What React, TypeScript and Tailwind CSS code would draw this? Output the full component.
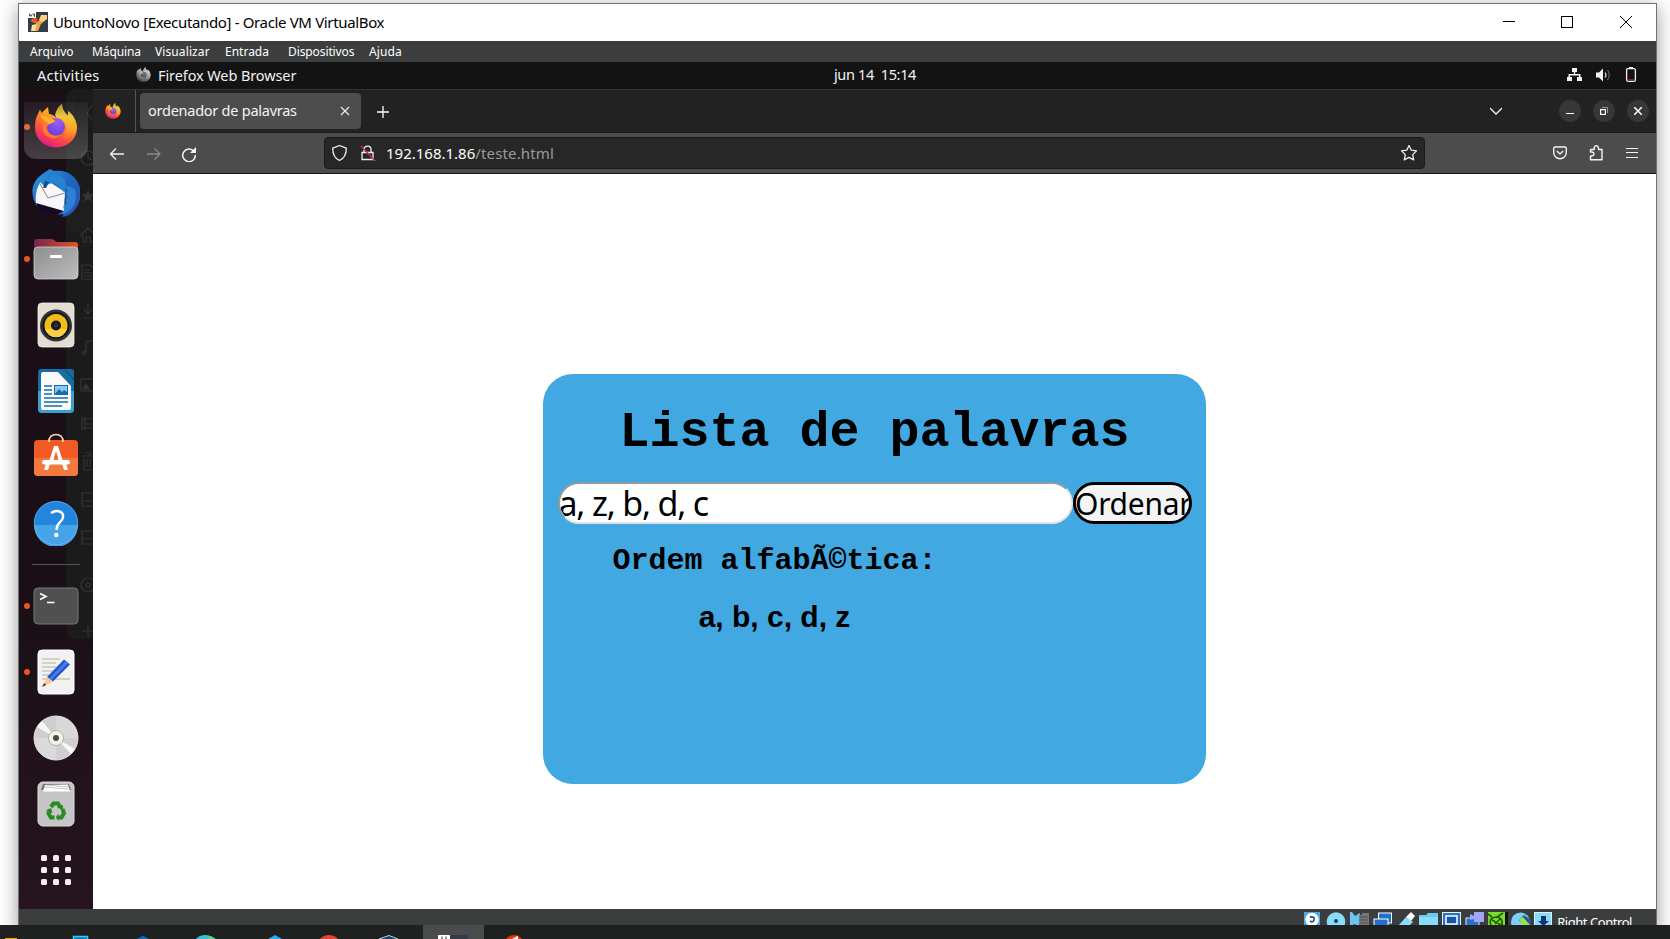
import React, { useId, useState } from "react";

const UI = "font-['Noto_Sans','Liberation_Sans',sans-serif]";

function Firefox({ className }: { className?: string }) {
  const id = useId().replace(/[^a-zA-Z0-9]/g, "");
  return (
    <svg viewBox="0 0 42 44" className={className}>
      <defs>
        <linearGradient id={id + "a"} x1="0.8" y1="0" x2="0.3" y2="1">
          <stop offset="0" stopColor="#ffe14a" />
          <stop offset="0.35" stopColor="#ffa726" />
          <stop offset="0.65" stopColor="#ff5a36" />
          <stop offset="1" stopColor="#e31587" />
        </linearGradient>
        <radialGradient id={id + "b"} cx="0.6" cy="0.2" r="0.9">
          <stop offset="0" stopColor="#a05cf5" />
          <stop offset="1" stopColor="#5b3fd0" />
        </radialGradient>
        <linearGradient id={id + "c"} x1="0" y1="0" x2="0" y2="1">
          <stop offset="0" stopColor="#a8922e" />
          <stop offset="0.35" stopColor="#ecc93a" />
          <stop offset="1" stopColor="#ff9a22" stopOpacity="0.2" />
        </linearGradient>
      </defs>
      <path
        d="M0 24C0 17 1 14 2 12L5 5.500L6.500 9L13 3L14 10C16 10 19 11.500 21 13C21 7 23 3 27 0C27 6 30 8 32.500 12L33.500 7C39 12 42 18 42 24A21 19.500 0 0 1 0 24Z"
        fill={`url(#${id}a)`}
      />
      <path d="M27 0C27 6 30 8 32.500 12L33.500 7C39 12 43 20 41 26C38 34 32 36 27 34C33 30 33 22 29 17C26 14 22 15 20 11C21 6 24 2 27 0Z" fill={`url(#${id}c)`} />
      <circle cx="21" cy="23" r="9" fill={`url(#${id}b)`} />
      <path d="M5 14C9 13 15 13 20 17L15 20C12 21 11 23 12 26C14 32 22 33 27 30C22 37 10 35 8 26C7 21 8 17 5 14Z" fill="#ff7a2a" />
      <path d="M5 12C11 11 17 14 20.500 17.500L14 20C11 18 8 16 5 12Z" fill="#ffb02e" />
    </svg>
  );
}

function Thunderbird() {
  return (
    <svg viewBox="0 0 48 48" className="size-12">
      <defs>
        <linearGradient id="tb" x1="0" y1="0" x2="1" y2="1">
          <stop offset="0" stopColor="#2f9be6" />
          <stop offset="0.5" stopColor="#1f66c0" />
          <stop offset="1" stopColor="#2a4fb5" />
        </linearGradient>
      </defs>
      <path d="M18 0L22 2C35 0 45 7 48 19C50 30 46 41 35 47L30 48L32 45L26 46C30 42 33 37 34 30L8 15L5 37C-2 27 -1 14 8 7C11 4 15 2 18 0Z" fill="url(#tb)" />
      <path d="M4 34C9 35 25 38 32 42C26 45 14 46 8 41Z" fill="#150a26" />
      <path d="M8 14L16 12L33 23L32 42L4 34C3 26 5 18 8 14Z" fill="#f7f7f9" />
      <path d="M8 15L16 29L33 24" fill="none" stroke="#8a8a92" strokeWidth="1" />
      <path d="M9 15C12 10 15 5 21 4C28 5 34 10 34 16L32 23L24 15C20 13 15 15 12 19C12 16 11 15 9 15Z" fill="#2583d2" />
      <path d="M13 12L17 13L14 19L11 19Z" fill="#174c8c" />
      <path d="M33 16L36 22L34 24L36 28L33 31L35 35L31 37L32 41L30 46C42 41 46 33 43 20Z" fill="#2f8ad8" opacity="0.8" />
    </svg>
  );
}

function Files() {
  return (
    <svg viewBox="0 0 46 42" className="h-[42px] w-[46px]">
      <defs>
        <linearGradient id="fb" x1="0" y1="0" x2="1" y2="0">
          <stop offset="0" stopColor="#752354" />
          <stop offset="1" stopColor="#e9541f" />
        </linearGradient>
        <linearGradient id="ff" x1="0" y1="0" x2="1" y2="1">
          <stop offset="0" stopColor="#8e8e8e" />
          <stop offset="1" stopColor="#bdbdbd" />
        </linearGradient>
      </defs>
      <path d="M1 4Q1 1 4 1H18Q20 1 21.500 2.500T25 4H42Q45 4 45 7V25H1Z" fill="url(#fb)" />
      <rect x="1" y="9" width="44" height="32" rx="4" fill="url(#ff)" stroke="#d0d0d0" strokeWidth="0.8" />
      <rect x="17" y="17" width="12" height="3" rx="1" fill="#fff" />
    </svg>
  );
}

function Rhythmbox() {
  return (
    <svg viewBox="0 0 38 46" className="h-[46px] w-[38px]">
      <rect x="1" y="1" width="36" height="44" rx="4" fill="#e3ded2" stroke="#f2efe8" strokeWidth="0.8" />
      <circle cx="19" cy="23.500" r="16" fill="#33343a" />
      <circle cx="19" cy="23.500" r="13.500" fill="#14151a" />
      <circle cx="19" cy="23.500" r="11.500" fill="#f0bd18" />
      <path d="M8 27A11.500 11.500 0 0 0 30 27Z" fill="#f8cf45" />
      <circle cx="19" cy="23.500" r="5" fill="#17191c" />
      <circle cx="19" cy="23.500" r="2" fill="#33363a" />
    </svg>
  );
}

function Writer() {
  return (
    <svg viewBox="0 0 38 46" className="h-[46px] w-[38px]">
      <path d="M5 1H27L37 12V41Q37 45 33 45H5Q1 45 1 41V5Q1 1 5 1Z" fill="#136ea8" />
      <path d="M1 23H37V41Q37 45 33 45H5Q1 45 1 41Z" fill="#3f9fd0" />
      <path d="M27 1H34Q37 1 37 4V11Z" fill="#1c6a9c" />
      <path d="M6 4H21L34 18V40Q34 42 32 42H6Q4 42 4 40V6Q4 4 6 4Z" fill="#fafafa" />
      <path d="M7 18H15M7 22H15M7 26H15M7 30H31M7 34H31M7 38H25" stroke="#136ea8" strokeWidth="1.700" />
      <rect x="17.500" y="17.500" width="13" height="9" fill="#8cc8ea" stroke="#136ea8" />
      <path d="M18 26L22 21L25 24L27 22L30 24V26Z" fill="#136ea8" />
    </svg>
  );
}

function Software() {
  return (
    <svg viewBox="0 0 46 44" className="-mt-[5px] h-[44px] w-[46px]">
      <rect x="1" y="7" width="44" height="36" rx="4" fill="#f15a24" />
      <path d="M1 25H45V39Q45 43 41 43H5Q1 43 1 39Z" fill="#f4793f" />
      <path d="M21 13H25L29.500 27H25.500L23 18L20.500 27H16.500Z" fill="#fff" />
      <rect x="9" y="27" width="28" height="4.500" rx="2.200" fill="#fff" />
      <path d="M12.800 31L11 37H15L17 31ZM29 31L31 37H35L33.200 31Z" fill="#fff" />
      <path d="M16 9C15 -1 31 -1 30 9" fill="none" stroke="#f0d9b5" strokeWidth="1.600" />
    </svg>
  );
}

function Help() {
  return (
    <svg viewBox="0 0 46 46" className="-mt-px size-[46px]">
      <circle cx="23" cy="23" r="22" fill="#2385dd" />
      <path d="M1 25H45A22 22 0 0 1 1 25Z" fill="#45a3e8" />
      <circle cx="23" cy="23" r="21.700" fill="none" stroke="#7bbdf0" strokeWidth="0.600" />
      <path d="M18 13C24 9 31 11.500 30 17.500C29 23 23.500 22 23.500 30" fill="none" stroke="#fff" strokeWidth="2.400" />
      <circle cx="23.300" cy="35" r="2.200" fill="#fff" />
    </svg>
  );
}

function Terminal() {
  return (
    <svg viewBox="0 0 46 38" className="h-[38px] w-[46px]">
      <rect x="1" y="1" width="44" height="36" rx="4" fill="#505050" stroke="#777" />
      <path d="M7 6.500L13 9.500L7 12.500" fill="none" stroke="#fff" strokeWidth="1.700" />
      <path d="M14 15.500H21.500" stroke="#fff" strokeWidth="1.500" />
    </svg>
  );
}

function TextEditor() {
  return (
    <svg viewBox="0 0 38 46" className="h-[46px] w-[38px]">
      <rect x="1" y="1" width="36" height="44" rx="4" fill="#f2f2f2" stroke="#fff" />
      <path d="M5 10H23M5 14H19M5 18H19M5 22H18M5 26H14M5 30H33" stroke="#c9c5b9" strokeWidth="1.700" />
      <path d="M10 28L27 10.500L33 15.500L16 32.500Z" fill="#2456cf" />
      <path d="M12 30L29 12L31 14L14 31Z" fill="#4d7fe8" />
      <path d="M10 28L16 32.500L6 37.500Z" fill="#fdc48b" />
      <path d="M7.300 34L9 36L5 38Z" fill="#3a2a22" />
    </svg>
  );
}

function Disc() {
  return (
    <svg viewBox="0 0 46 46" className="size-[46px]">
      <circle cx="23" cy="23" r="22" fill="#cfcfcf" stroke="#e4e4e4" />
      <path d="M23 23V1A22 22 0 0 1 45 23Z" fill="#d9d9d9" />
      <path d="M23 23V45A22 22 0 0 1 1 23Z" fill="#dadada" />
      <path d="M23 23L4 12L9 6ZM23 23L42 34L38 39Z" fill="#f7f7f5" />
      <circle cx="23" cy="23" r="7.500" fill="#f5f3ee" stroke="#b9af9c" />
      <circle cx="23" cy="23" r="3" fill="#4b4b4b" />
    </svg>
  );
}

function Trash() {
  return (
    <svg viewBox="0 0 38 46" className="h-[46px] w-[38px]">
      <rect x="1" y="1" width="36" height="44" rx="5" fill="#c6c6c6" stroke="#dcdcdc" />
      <path d="M4 9L6 3H32L34 9Z" fill="#777" />
      <path d="M6 10.500L8 4L31 3.500L33 10.500Z" fill="#fff" />
      <path d="M7 6L31 8M9 4L32 6" stroke="#aaa" strokeWidth="0.700" />
      <g fill="none" stroke="#2a8a1f" strokeWidth="4">
        <path d="M14 26L16.500 22.500H21L23.500 26.500" />
        <path d="M25.500 28L27 32L24.500 36.500H20.500" />
        <path d="M17.500 36.500H14L11.500 32.500L13 28.500" />
      </g>
      <path d="M20 26.500L26 24V29ZM21.500 32.500V40L18.800 36.500ZM9 29.500L14 27L15.500 32Z" fill="#2a8a1f" />
    </svg>
  );
}

function AppGrid() {
  return (
    <div className="grid grid-cols-3 gap-x-[6px] gap-y-[6px]">
      {Array.from({ length: 9 }, (_, i) => (
        <span key={i} className="size-[6px] rounded-[1.5px] bg-[#f2f0ef]" />
      ))}
    </div>
  );
}

function DockItem({ running, children }: { running?: boolean; children: React.ReactNode }) {
  return (
    <li className="relative flex h-[66px] shrink-0 items-center justify-center">
      {running && <span className="absolute top-[30px] left-[5px] size-[6px] rounded-full bg-[#e95420]" />}
      {children}
    </li>
  );
}

function BackgroundWindow() {
  return (
    <svg viewBox="0 0 27 550" className="absolute top-0 left-[47px] h-[550px] w-[27px]">
      <path d="M27 0H10Q0 0 0 10V540Q0 550 10 550H27Z" fill="#1b1b1b" />
      <path d="M7 40V10Q7 7 10 7H27" fill="none" stroke="#222" />
      <path d="M0 106H27V144H0Z" fill="#1e1e1e" />
      <g fill="none" stroke="#353535" strokeWidth="1.200">
        <path d="M26 16L21 24L26 31" />
        <circle cx="22" cy="69" r="7" />
        <path d="M22 64V69L26 71" />
        <path d="M14 147L22 139L30 147M17 146V153H20V148H24V153H27" />
        <path d="M16 176H24L28 180V190H16ZM18 181H24M18 184H27M18 187H27" />
        <path d="M22 214V224M18 220L22 225L26 220M18 229H27" />
        <path d="M20 264V253L27 251" />
        <circle cx="18" cy="264" r="1.500" />
        <rect x="15" y="290" width="16" height="12" />
        <path d="M17 300L20 295L23 300Z" fill="#353535" />
        <path d="M16 328V341M19 328V341M16 330H27M19 335H27M16 339H27" />
        <path d="M16 367H27M18 369V381H27M20 364H24V367M21 370V378M24 370V378" />
        <path d="M27 404H16V417H27M16 412H27M27 442H16V455H27M16 450H27" />
        <circle cx="22" cy="496" r="7" />
        <circle cx="22" cy="496" r="2" />
        <path d="M16 542H27M22 536V548" />
      </g>
      <path d="M22 101L24 105H28L25 108L26 113L22 110L18 113L19 108L16 105H20Z" fill="#353535" />
    </svg>
  );
}

function Dock() {
  return (
    <nav className="relative w-[74px] shrink-0 overflow-hidden bg-linear-to-b from-[#1a0f16] from-60% to-[#26141f]">
      <BackgroundWindow />
      <ul className="relative pt-[5px]">
        <DockItem running>
          <span className="absolute top-[8px] left-[5px] h-[57px] w-16 rounded-b-xl bg-linear-to-b from-white/5 to-white/20" />
          <Firefox className="relative -mt-[2px] h-[44px] w-[42px]" />
        </DockItem>
        <DockItem><Thunderbird /></DockItem>
        <DockItem running><Files /></DockItem>
        <DockItem><Rhythmbox /></DockItem>
        <DockItem><Writer /></DockItem>
        <DockItem><Software /></DockItem>
        <DockItem><Help /></DockItem>
        <li className="flex h-[17px] items-center justify-center">
          <span className="h-px w-12 bg-[#5a5156]" />
        </li>
        <DockItem running><Terminal /></DockItem>
        <DockItem running><TextEditor /></DockItem>
        <DockItem><Disc /></DockItem>
        <DockItem><Trash /></DockItem>
        <DockItem><AppGrid /></DockItem>
      </ul>
    </nav>
  );
}

function TitleBar() {
  return (
    <header className="flex h-[37px] shrink-0 items-center bg-white pl-[9px]">
      <svg viewBox="0 0 20 20" className="-mt-px size-5">
        <rect width="20" height="20" fill="#343c4a" />
        <path d="M4 7L9 10L19 3V7L13 12L10 19H4L9 12L3 9Z" fill="#f0a040" />
        <path d="M13 3H19V7L14 10L11 8Z" fill="#ffd27a" />
        <path d="M4 13L9 12L7 19H3Z" fill="#fbe0a0" />
        <circle cx="7" cy="8" r="2.500" fill="#e8541c" />
        <rect width="8" height="6" fill="#fff" />
        <path d="M1.500 1.500V4H3.500V3H1.500M5 1.500V3H7M6.500 1.500V5" fill="none" stroke="#333" strokeWidth="0.800" />
      </svg>
      <h1 className="mt-[-2px] ml-[5px] text-[15px] leading-5 tracking-[-0.35px] whitespace-nowrap text-black">
        UbuntoNovo [Executando] - Oracle VM VirtualBox
      </h1>
      <svg viewBox="0 0 132 14" className="-mt-px mr-[22px] ml-auto h-[14px] w-[132px]" fill="none" stroke="#000" shapeRendering="crispEdges">
        <path d="M1 6.500H13" />
        <rect x="59.500" y="1.500" width="11" height="11" />
        <path d="M118 1L130 13M130 1L118 13" shapeRendering="auto" />
      </svg>
    </header>
  );
}

function MenuBar() {
  return (
    <div className="flex h-[21px] shrink-0 items-center bg-[#3b3d3e] pl-[11px] text-[12px] leading-none whitespace-nowrap text-white">
      <span className="w-[62px]">Arquivo</span>
      <span className="w-[63px] tracking-[-0.1px]">Máquina</span>
      <span className="w-[70px] tracking-[0.1px]">Visualizar</span>
      <span className="w-[63px]">Entrada</span>
      <span className="w-[81px] tracking-[-0.1px]">Dispositivos</span>
      <span className="tracking-[0.1px]">Ajuda</span>
    </div>
  );
}

function GnomeBar() {
  return (
    <div className="grid h-[27px] shrink-0 grid-cols-3 items-center bg-[#131313] text-[14.5px] leading-none whitespace-nowrap text-[#f2f2f2]">
      <div className="flex items-center pl-[18px]">
        <span className="w-[99px] tracking-[0.2px]">Activities</span>
        <Firefox className="-mt-[2px] h-[15px] w-[15px] grayscale" />
        <span className="ml-[7px] tracking-[-0.1px]">Firefox Web Browser</span>
      </div>
      <span className="-mt-[2px] pl-[75px] text-center tracking-[-0.35px] whitespace-pre">jun 14  15:14</span>
      <svg viewBox="0 0 72 18" className="-mt-px mr-[17px] ml-auto h-[18px] w-[72px]" fill="#f2f2f2">
        <path d="M5 2H10V6H8.200V8H13.500V11H15V15H10V11H12V9.500H3V11H5V15H0V11H1.500V8H6.800V6H5Z" />
        <path d="M29 6.500H32L36 2.500V15.500L32 11.500H29Z" />
        <path d="M38 6.500Q40 9 38 11.500" fill="none" stroke="#ddd" strokeWidth="1.200" />
        <path d="M40.500 4Q44 9 40.500 14" fill="none" stroke="#777" strokeWidth="1" />
        <rect x="59.600" y="2.600" width="8.800" height="12.800" rx="1.500" fill="none" stroke="#eee" strokeWidth="1.300" />
        <path d="M62 1H66V3H62Z" />
        <path d="M61 13.800H67" stroke="#c01c28" strokeWidth="1.200" />
      </svg>
    </div>
  );
}

function TabStrip() {
  return (
    <div className="flex h-[44px] shrink-0 items-center border-t border-b border-t-[#333] border-b-[#191919] bg-[#222]">
      <div className="flex h-full w-[43px] items-center justify-center border-r border-[#555] pr-[3px]">
        <Firefox className="size-4" />
      </div>
      <div className="ml-[4px] flex h-9 w-[221px] items-center justify-between rounded bg-[#4d4d4d] pr-[12px] pl-[8px] text-[14.5px] text-[#f4f4f4]">
        <span className="tracking-[-0.25px] whitespace-nowrap">ordenador de palavras</span>
        <svg viewBox="0 0 8 8" className="size-2 overflow-visible" stroke="#eee" strokeWidth="1.100"><path d="M0 0L8 8M8 0L0 8" /></svg>
      </div>
      <svg viewBox="0 0 12 12" className="mt-px ml-[16px] size-3" stroke="#fff" strokeWidth="1.300"><path d="M6 0V12M0 6H12" /></svg>
      <svg viewBox="0 0 12 8" className="mr-[57px] ml-auto h-2 w-3" fill="none" stroke="#eee" strokeWidth="1.300"><path d="M0 1L6 7L12 1" /></svg>
      <div className="flex gap-3 pr-[7px]">
        <span className="flex size-[22px] items-center justify-center rounded-full bg-[#373737]">
          <span className="mt-[5px] h-px w-2 bg-white" />
        </span>
        <span className="flex size-[22px] items-center justify-center rounded-full bg-[#373737]">
          <svg viewBox="0 0 8 8" className="size-2" fill="none">
            <path d="M2 0.500H7.500V6" stroke="#999" />
            <rect x="0.600" y="2.600" width="4.800" height="4.800" stroke="#fff" strokeWidth="1.200" />
          </svg>
        </span>
        <span className="flex size-[22px] items-center justify-center rounded-full bg-[#373737]">
          <svg viewBox="0 0 8 8" className="size-2" stroke="#fff" strokeWidth="1.500"><path d="M0 0L8 8M8 0L0 8" /></svg>
        </span>
      </div>
    </div>
  );
}

function Toolbar() {
  return (
    <div className="flex h-[41px] shrink-0 items-center border-b border-[#151515] bg-[#4c4c4c]">
      <svg viewBox="0 0 88 16" className="mt-px ml-[15px] h-4 w-[88px]" fill="none" stroke="#f4f4f4" strokeWidth="1.300">
        <path d="M16 8H2.500M8 2.500L2.500 8L8 13.500" />
        <path d="M39 8H52M46.500 2.500L52 8L46.500 13.500" stroke="#8a8a8a" />
        <path d="M86 5.500A6.300 6.300 0 1 0 87.300 9" strokeWidth="1.500" />
        <path d="M88 1V7H82Z" fill="#f4f4f4" stroke="none" />
      </svg>
      <div className="ml-[128px] flex h-[32px] w-[1101px] items-center rounded border border-[#1a1a1a] bg-[#272727] pr-[6px] pl-[6px]">
        <svg viewBox="0 0 46 18" className="h-[18px] w-[46px]" fill="none" stroke="#f0f0f0" strokeWidth="1.300">
          <path d="M8.500 1.500L15.300 4.200C15.300 9.500 14 14 8.500 16.500C3 14 1.700 9.500 1.700 4.200Z" strokeLinejoin="round" />
          <path d="M31 8.500H42V15.500H31ZM33 8V5.500C33.500 1 40 1 40 5.500V8" />
          <path d="M30 2L44 17" stroke="#e22850" />
        </svg>
        <span className="ml-[9px] text-[15px] whitespace-nowrap text-[#9b9b9b]">
          <span className="text-white">192.168.1.86</span>
          <span className="tracking-[0.15px]">/teste.html</span>
        </span>
        <svg viewBox="0 0 18 18" className="ml-auto size-[18px]" fill="none" stroke="#f0f0f0" strokeWidth="1.300" strokeLinejoin="round">
          <path d="M9 1.500L11.300 6.200L16.500 6.900L12.700 10.600L13.700 15.900L9 13.400L4.300 15.900L5.300 10.600L1.500 6.900L6.700 6.200Z" />
        </svg>
      </div>
      <svg viewBox="0 0 86 18" className="mr-[18px] ml-auto h-[18px] w-[86px]" fill="none" stroke="#f4f4f4" strokeWidth="1.400">
        <path d="M3 3H13Q14.300 3 14.300 4.500V8C14.300 17 1.700 17 1.700 8V4.500Q1.700 3 3 3ZM4.800 7L8 10L11.200 7" />
        <path d="M38.500 15.800H50V5.500H46.500V4Q46 1.600 44.300 1.600T42.200 4V5.500H38.500V8H40Q42 8.300 42 10T40 12H38.500Z" strokeLinejoin="round" />
        <path d="M74 4.500H86M74 8.500H86M74 13.500H86" strokeWidth="1.100" />
      </svg>
    </div>
  );
}

function WordSorter() {
  const [words, setWords] = useState("a, z, b, d, c");
  const [sorted, setSorted] = useState("a, b, c, d, z");
  const sort = () => setSorted(words.split(",").map((w) => w.trim()).sort().join(", "));
  return (
    <section className="h-[410px] w-[663px] rounded-[30px] bg-[#41a8e1] px-[15px] pt-[30px] text-black">
      <h2 className="text-center font-['Liberation_Mono',monospace] text-[50px] leading-[57px] font-bold">Lista de palavras</h2>
      <div className="mt-[21px] flex h-[42px] w-[634px]">
        <input
          value={words}
          onChange={(e) => setWords(e.target.value)}
          className="w-[515px] rounded-[21px] border-2 border-t-[#999] border-r-[#e3e3e3] border-b-[#e3e3e3] border-l-[#999] bg-white p-0 indent-[-1.5px] text-[34px] leading-9 tracking-[-1.2px] outline-none"
        />
        <button onClick={sort} className="w-[119px] overflow-hidden rounded-[21px] border-3 border-black bg-[#f4f4f4] pt-px text-left indent-[-1px] text-[30px] leading-9 tracking-[-0.3px]">
          Ordenar
        </button>
      </div>
      <div className="w-[433px] text-center text-[30px] leading-[34px] font-bold">
        <p className="mt-5 font-['Liberation_Mono',monospace]">Ordem alfabÃ©tica:</p>
        <p className="mt-[22px] font-['Liberation_Sans',sans-serif]">{sorted}</p>
      </div>
    </section>
  );
}

function StatusBar() {
  return (
    <footer className="flex h-4 shrink-0 items-start overflow-hidden bg-[#3b3d3e] pt-[3px] pr-[24px]">
      <svg viewBox="0 0 248 16" className="mr-[5px] ml-auto h-4 w-[248px] shrink-0">
        <rect width="16" height="16" fill="#4da6e8" />
        <circle cx="8" cy="7.500" r="6.800" fill="#fff" />
        <path d="M6 5Q11 4 10 8Q9 11 6 9" fill="none" stroke="#1d4f99" strokeWidth="1.800" />
        <circle cx="32" cy="9.500" r="9.300" fill="#8adcfb" />
        <circle cx="32" cy="9" r="2" fill="#123c78" />
        <path d="M46 0H48L51 4L56 1V16L51 12L46 14Z" fill="#6cc5f0" />
        <path d="M55 3H58V1H65V16H55Z" fill="#74787b" />
        <path d="M56 5H64M56 8H64M56 11H64" stroke="#4c4f51" strokeWidth="1" />
        <rect x="74.500" y="1" width="13" height="10" fill="#2472c8" stroke="#fff" />
        <rect x="70" y="7" width="14" height="9" fill="#2472c8" stroke="#fff" />
        <path d="M94 14L102 5L109 10L103 16H94Z" fill="#8adcfb" />
        <path d="M102 5L107 0L111 4L107 9Z" fill="#fff" />
        <path d="M115 3H122L124 1H134V16H115Z" fill="#6cc8f5" />
        <path d="M115 5H134V16H115Z" fill="#8adcfb" />
        <rect x="138.500" y="0.500" width="18" height="16" fill="#2472c8" stroke="#eee" />
        <rect x="142" y="4" width="11" height="8" fill="#1556a8" stroke="#fff" strokeWidth="1.500" />
        <rect x="162" y="6" width="13" height="10" fill="#2472c8" stroke="#dbe9ff" />
        <path d="M166 2L170 4V0H180V10H170V7L166 8Z" fill="#a0a4fa" />
        <rect x="184" y="0" width="17" height="16" fill="#7ddb2c" />
        <path d="M184 2L188 5M199 1L193 5M187 13Q184 6 192 5Q199 5 198 13M188 8L197 13M191 12L196 7" fill="none" stroke="#255c0c" strokeWidth="1.700" />
        <path d="M201 0H204V16H201Z" fill="#111" />
        <circle cx="216.500" cy="10" r="9.500" fill="#7ecff5" />
        <path d="M215 8L220 3L227 8L226 16H222Z" fill="#205b9e" />
        <path d="M215 7L219 5L227 14L221 17Z" fill="#98e44a" />
        <rect x="230.500" y="0.500" width="17" height="16" fill="#8adcfb" stroke="#d6f3ff" />
        <path d="M237 4H242V9H245L239.500 14L234 9H237Z" fill="#0c3470" />
      </svg>
      <span className="text-[13px] leading-[20px] tracking-[-0.45px] whitespace-nowrap text-white">Right Control</span>
    </footer>
  );
}

function Taskbar() {
  return (
    <div className="h-[14px] shrink-0 bg-[#1f2120]">
      <svg viewBox="0 0 560 14" className="h-[14px] w-[560px]">
        <path d="M423 0H484V14H423Z" fill="#4a4b4b" />
        <path d="M5 13H17V14H5Z" fill="#e9a512" />
        <path d="M73.500 14V11.500H87.500V14" fill="#1176c0" stroke="#2ad0f5" strokeWidth="1.500" />
        <path d="M137 14L143 10.500L149 14Z" fill="#1262b8" />
        <circle cx="205" cy="22.500" r="12.500" fill="#35c3d6" />
        <path d="M208 10.500Q213 11 216 14H208Z" fill="#58cf9a" />
        <path d="M268 14L275 10L282 14Z" fill="#29a9ee" />
        <circle cx="329" cy="22.500" r="12.500" fill="#e5412f" />
        <path d="M379 14L389 10.500L398 14" fill="#1c3d68" stroke="#c7d2dd" />
        <path d="M450 10H468V14H450Z" fill="#343c4a" />
        <path d="M438 10H450V14H438Z" fill="#fff" />
        <path d="M442 11.500V14M446 11.500V14" stroke="#333" />
        <circle cx="514" cy="19.500" r="9.500" fill="#d83b05" />
        <path d="M512 14L518 10.500V14Z" fill="#f6e6dc" />
      </svg>
    </div>
  );
}

export default function App() {
  return (
    <div className={`flex h-[939px] w-[1670px] flex-col overflow-hidden bg-white ${UI}`}>
      <div className="flex h-[925px] shrink-0 overflow-hidden pt-[3px] pl-[18px]">
        <div className="flex h-[930px] w-[1639px] flex-col border border-b-0 border-[#707274] shadow-[0_4px_18px_rgba(0,0,0,0.4)]">
          <TitleBar />
          <MenuBar />
          <GnomeBar />
          <div className="flex h-[820px] shrink-0">
            <Dock />
            <div className="flex min-w-0 flex-1 flex-col">
              <TabStrip />
              <Toolbar />
              <main className="flex flex-1 items-center justify-center bg-white">
                <div className="pt-[75px]">
                  <WordSorter />
                </div>
              </main>
            </div>
          </div>
          <StatusBar />
        </div>
      </div>
      <Taskbar />
    </div>
  );
}
